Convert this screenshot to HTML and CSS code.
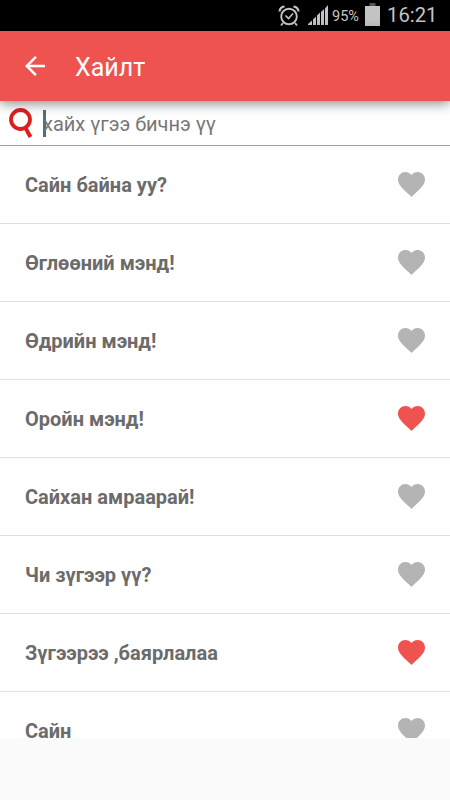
FILE: index.html
```html
<!DOCTYPE html>
<html lang="mn">
<head>
<meta charset="utf-8">
<title>Хайлт</title>
<link rel="stylesheet" href="styles.css">
</head>
<body>
<svg class="defs" aria-hidden="true"><symbol id="heart" viewBox="2 3 20 18.35"><path d="M12 21.35l-1.45-1.32C5.4 15.36 2 12.28 2 8.5 2 5.42 4.42 3 7.5 3c1.74 0 3.41.81 4.5 2.09C13.09 3.81 14.76 3 16.5 3 19.58 3 22 5.42 22 8.5c0 3.78-3.4 6.86-8.55 11.54L12 21.35z"/></symbol></svg>
<div class="status">
  <svg class="alarm" viewBox="0 0 22 22"><g fill="none" stroke="#c4c4c4"><circle cx="11" cy="11.5" r="7.8" stroke-width="1.9"/><path d="M1.5 6.5Q2 2 6.5 1.5M20.5 6.5Q20 2 15.5 1.5" stroke-width="2.2"/><path d="M7.5 10.5l3 3 4.5-5" stroke-width="1.6"/><path d="M5 18l-2 2.5M17 18l2 2.5" stroke-width="2"/></g></svg>
  <svg class="signal" viewBox="0 0 20 20" fill="#c4c4c4"><path d="M0 20v-1l4-3.500V20zM5 20v-5.500l3-3V20zM9 20v-9.500l3-3V20zM13 20V7l3-3v16zM17 20V3.500L20 0v20z"/></svg>
  <span class="percent">95%</span>
  <svg class="battery" viewBox="0 0 15 23"><path fill="#555" d="M4.500 0h6v3h-6z"/><path fill="#c4c4c4" d="M0 3h15v20H0z"/></svg>
  <span class="clock">16:21</span>
</div>
<header class="bar">
  <svg class="back" viewBox="4 4 16 16"><path fill="#fff" d="M20 11H7.830l5.590-5.590L12 4l-8 8 8 8 1.410-1.410L7.830 13H20v-2z"/></svg>
  <h1 class="title">Хайлт</h1>
</header>
<div class="search">
  <svg class="lens" viewBox="0 0 25 31"><g fill="none" stroke="#dc2020"><circle cx="11.500" cy="11.500" r="9.500" stroke-width="3.800"/><path d="M16.500 20l5 9" stroke-width="4"/></g></svg>
  <span class="caret"></span>
  <span class="hint">хайх үгээ бичнэ үү</span>
</div>
<main class="list">
  <div class="row"><span class="phrase">Сайн байна уу?</span><svg class="heart"><use href="#heart"/></svg></div>
  <div class="row"><span class="phrase">Өглөөний мэнд!</span><svg class="heart"><use href="#heart"/></svg></div>
  <div class="row"><span class="phrase">Өдрийн мэнд!</span><svg class="heart"><use href="#heart"/></svg></div>
  <div class="row"><span class="phrase">Оройн мэнд!</span><svg class="heart liked"><use href="#heart"/></svg></div>
  <div class="row"><span class="phrase">Сайхан амраарай!</span><svg class="heart"><use href="#heart"/></svg></div>
  <div class="row"><span class="phrase">Чи зүгээр үү?</span><svg class="heart"><use href="#heart"/></svg></div>
  <div class="row"><span class="phrase">Зүгээрээ ,баярлалаа</span><svg class="heart liked"><use href="#heart"/></svg></div>
  <div class="row"><span class="phrase">Сайн</span><svg class="heart"><use href="#heart"/></svg></div>
</main>
</body>
</html>
```

FILE: styles.css
```css
* { box-sizing: border-box; }
body {
  margin: 0;
  height: 800px;
  overflow: hidden;
  background: #fafafa;
  font-family: Roboto, "Noto Sans", sans-serif;
}
svg { display: block; flex: none; }
.defs { display: none; }
.status {
  display: flex;
  align-items: center;
  height: 31px;
  padding-left: 278px;
  background: #000;
  color: #c4c4c4;
  white-space: nowrap;
}
.alarm { width: 22px; height: 22px; }
.signal { width: 20px; height: 20px; margin-left: 8px; margin-top: -1px; }
.percent { width: 27px; margin-left: 4px; margin-top: 2px; font-size: 14.500px; }
.battery { width: 15px; height: 23px; margin-left: 6px; margin-top: -2px; }
.clock { margin-left: 7px; margin-top: -2px; font-size: 20.300px; }
.bar {
  position: relative;
  display: flex;
  align-items: center;
  height: 70px;
  padding-left: 25px;
  background: #ef5350;
  box-shadow: 0 2px 12px rgba(0, 0, 0, .5);
}
.back { width: 20px; height: 20px; }
.title {
  margin: 2px 0 0 30px;
  color: #fff;
  font-size: 25px;
  font-weight: 400;
}
.search {
  display: flex;
  align-items: center;
  height: 45px;
  padding-left: 9px;
  border-bottom: 1px solid #ef7d7b;
  background: #fff;
}
.lens { width: 25px; height: 31px; }
.caret { width: 3px; height: 27px; margin-left: 9px; background: #546e7a; }
.hint { margin-top: 2px; margin-left: -3px; color: #777; font-size: 20px; }
.list { height: 592px; overflow: hidden; background: #fff; }
.row {
  display: flex;
  align-items: center;
  justify-content: space-between;
  height: 78px;
  padding: 0 25px;
  border-bottom: 1px solid #e0e0e0;
}
.phrase { color: #6b6b6b; font-size: 20px; font-weight: 700; }
.heart { width: 27px; height: 25px; fill: #b4b4b4; }
.liked { fill: #ef5350; }
```
